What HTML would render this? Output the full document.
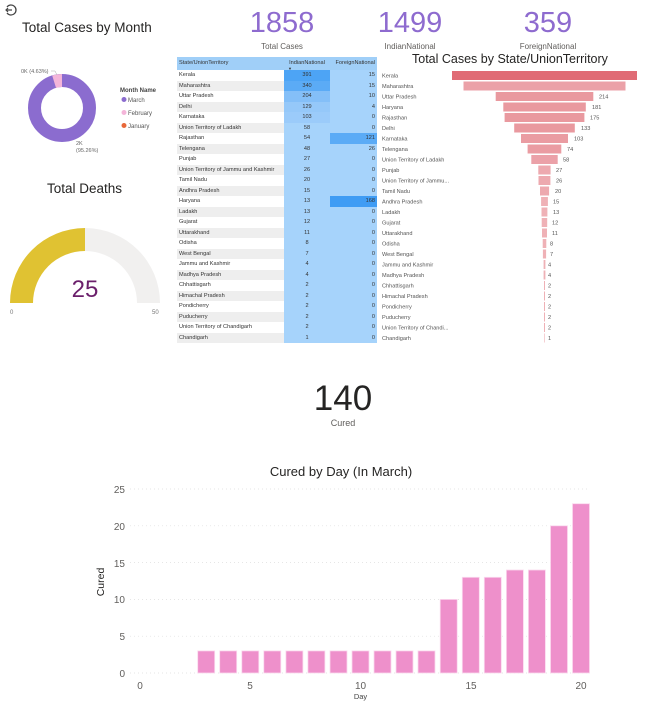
<!DOCTYPE html>
<html><head><meta charset="utf-8"><style>
*{margin:0;padding:0;box-sizing:border-box}
body{width:671px;height:705px;background:#fff;position:relative;overflow:hidden;font-family:"Liberation Sans",sans-serif;color:#252423}
.a{position:absolute;white-space:nowrap}
.kpi{font-size:29px;color:#8E6BCF;text-align:center;width:120px}
.kl{font-size:8px;color:#605E5C;text-align:center;width:120px}
table{position:absolute;left:177px;top:57px;border-collapse:collapse;font-size:5.6px;color:#333;table-layout:fixed;width:200px}
td{height:10.5px;padding:0 2px;line-height:10.5px;overflow:hidden;white-space:nowrap}
td.s{width:107px;}
td.n{width:46px;text-align:right;background:#A6D3FB}
td.i{text-align:center}
tr:nth-child(odd) td.s{background:#EEEEEE}
tr:nth-child(even) td.s{background:#fff}
tr.h td{background:#A0CFF8;height:13px;line-height:11px;position:relative}
</style></head><body>
<svg class="a" style="left:4px;top:3px" width="14" height="14" viewBox="0 0 14 14"><path d="M3 4 A5 5 0 1 1 3 10" fill="none" stroke="#444" stroke-width="1.3"/><path d="M2 7 H8 M4 5 L2 7 L4 9" fill="none" stroke="#444" stroke-width="1.2"/></svg>
<div class="a" style="left:22px;top:20px;font-size:13.5px">Total Cases by Month</div>
<svg class="a" style="left:0;top:0" width="170" height="170">
<circle cx="62" cy="108" r="27.5" fill="none" stroke="#8B6CCF" stroke-width="13"/>
<path d="M54.1 81.7 A27.5 27.5 0 0 1 62 80.5" fill="none" stroke="#F4B5D9" stroke-width="13"/>
<text x="21" y="73" font-size="5.5" fill="#666" font-family="Liberation Sans">0K (4.63%)</text>
<path d="M51 71 H55 L57 75" fill="none" stroke="#aaa" stroke-width="0.5"/>
<text x="76" y="145" font-size="5.5" fill="#666" font-family="Liberation Sans">2K</text>
<text x="76" y="152" font-size="5.5" fill="#666" font-family="Liberation Sans">(95.26%)</text>
<text x="120" y="92" font-size="6" font-weight="bold" fill="#444" font-family="Liberation Sans">Month Name</text>
<circle cx="124" cy="99.5" r="2.5" fill="#8B6CCF"/><text x="128" y="102" font-size="6" fill="#555" font-family="Liberation Sans">March</text>
<circle cx="124" cy="112.5" r="2.5" fill="#F4B5D9"/><text x="128" y="115" font-size="6" fill="#555" font-family="Liberation Sans">February</text>
<circle cx="124" cy="125.5" r="2.5" fill="#E8683A"/><text x="128" y="128" font-size="6" fill="#555" font-family="Liberation Sans">January</text>
</svg>
<div class="a" style="left:47px;top:181px;font-size:13.5px">Total Deaths</div>
<svg class="a" style="left:0;top:220px" width="170" height="100">
<path d="M10 83 A75 75 0 0 1 85 8 L85 31 A52 52 0 0 0 33 83 Z" fill="#E0C232"/>
<path d="M85 8 A75 75 0 0 1 160 83 L137 83 A52 52 0 0 0 85 31 Z" fill="#F1F0EF"/>
<text x="85" y="77" font-size="24" fill="#6B1F6B" text-anchor="middle" font-family="Liberation Sans">25</text>
<text x="10" y="94" font-size="6" fill="#777" font-family="Liberation Sans">0</text>
<text x="152" y="94" font-size="6" fill="#777" font-family="Liberation Sans">50</text>
</svg>
<div class="a kpi" style="left:222px;top:7px">1858</div><div class="a kl" style="left:222px;top:42px">Total Cases</div>
<div class="a kpi" style="left:350px;top:7px">1499</div><div class="a kl" style="left:350px;top:42px">IndianNational</div>
<div class="a kpi" style="left:488px;top:7px">359</div><div class="a kl" style="left:488px;top:42px">ForeignNational</div>
<table>
<colgroup><col style="width:107px"><col style="width:46px"><col style="width:47px"></colgroup>
<tr class="h"><td class="s" style="background:#A0CFF8">State/UnionTerritory</td><td class="i" style="background:#A0CFF8">IndianNational<span style="position:absolute;left:4px;top:6px;font-size:4px">▼</span></td><td style="text-align:right;background:#A0CFF8">ForeignNational</td></tr>
<tr><td class="s">Kerala</td><td class="n i" style="background:#4DA4F5">391</td><td class="n">15</td></tr>
<tr><td class="s">Maharashtra</td><td class="n i" style="background:#5BABF6">340</td><td class="n">15</td></tr>
<tr><td class="s">Uttar Pradesh</td><td class="n i" style="background:#84BFF8">204</td><td class="n">10</td></tr>
<tr><td class="s">Delhi</td><td class="n i" style="background:#95C8F9">129</td><td class="n">4</td></tr>
<tr><td class="s">Karnataka</td><td class="n i" style="background:#9BCBFA">103</td><td class="n">0</td></tr>
<tr><td class="s">Union Territory of Ladakh</td><td class="n i">58</td><td class="n">0</td></tr>
<tr><td class="s">Rajasthan</td><td class="n i">54</td><td class="n" style="background:#5BABF6">121</td></tr>
<tr><td class="s">Telengana</td><td class="n i">48</td><td class="n">26</td></tr>
<tr><td class="s">Punjab</td><td class="n i">27</td><td class="n">0</td></tr>
<tr><td class="s">Union Territory of Jammu and Kashmir</td><td class="n i">26</td><td class="n">0</td></tr>
<tr><td class="s">Tamil Nadu</td><td class="n i">20</td><td class="n">0</td></tr>
<tr><td class="s">Andhra Pradesh</td><td class="n i">15</td><td class="n">0</td></tr>
<tr><td class="s">Haryana</td><td class="n i">13</td><td class="n" style="background:#3F9CF4">168</td></tr>
<tr><td class="s">Ladakh</td><td class="n i">13</td><td class="n">0</td></tr>
<tr><td class="s">Gujarat</td><td class="n i">12</td><td class="n">0</td></tr>
<tr><td class="s">Uttarakhand</td><td class="n i">11</td><td class="n">0</td></tr>
<tr><td class="s">Odisha</td><td class="n i">8</td><td class="n">0</td></tr>
<tr><td class="s">West Bengal</td><td class="n i">7</td><td class="n">0</td></tr>
<tr><td class="s">Jammu and Kashmir</td><td class="n i">4</td><td class="n">0</td></tr>
<tr><td class="s">Madhya Pradesh</td><td class="n i">4</td><td class="n">0</td></tr>
<tr><td class="s">Chhattisgarh</td><td class="n i">2</td><td class="n">0</td></tr>
<tr><td class="s">Himachal Pradesh</td><td class="n i">2</td><td class="n">0</td></tr>
<tr><td class="s">Pondicherry</td><td class="n i">2</td><td class="n">0</td></tr>
<tr><td class="s">Puducherry</td><td class="n i">2</td><td class="n">0</td></tr>
<tr><td class="s">Union Territory of Chandigarh</td><td class="n i">2</td><td class="n">0</td></tr>
<tr><td class="s">Chandigarh</td><td class="n i">1</td><td class="n">0</td></tr>
</table>
<div class="a" style="left:412px;top:52px;font-size:12.5px">Total Cases by State/UnionTerritory</div>
<svg class="a" style="left:380px;top:65px" width="291" height="285" font-family="Liberation Sans" font-size="5.6" fill="#555">
<g transform="translate(-380,-65)">
<rect x="452" y="71" width="185" height="9" fill="#E06B75"/><text x="382" y="77.5">Kerala</text>
<rect x="463.5" y="81.5" width="162" height="9" fill="#EBA1A8"/><text x="382" y="88">Maharashtra</text>
<rect x="495.7" y="92" width="97.6" height="9" fill="#E9999F"/><text x="382" y="98.5">Uttar Pradesh</text><text x="599" y="98.5">214</text>
<rect x="503.3" y="102.5" width="82.5" height="9" fill="#E9999F"/><text x="382" y="109">Haryana</text><text x="592" y="109">181</text>
<rect x="504.6" y="113" width="79.8" height="9" fill="#E9999F"/><text x="382" y="119.5">Rajasthan</text><text x="590" y="119.5">175</text>
<rect x="514.2" y="123.5" width="60.6" height="9" fill="#E9999F"/><text x="382" y="130">Delhi</text><text x="581" y="130">133</text>
<rect x="521" y="134" width="47" height="9" fill="#EA9CA2"/><text x="382" y="140.5">Karnataka</text><text x="574" y="140.5">103</text>
<rect x="527.6" y="144.5" width="33.7" height="9" fill="#EA9CA2"/><text x="382" y="151">Telengana</text><text x="567" y="151">74</text>
<rect x="531.3" y="155" width="26.4" height="9" fill="#EBA1A8"/><text x="382" y="161.5">Union Territory of Ladakh</text><text x="563" y="161.5">58</text>
<rect x="538.3" y="165.5" width="12.3" height="9" fill="#EDA9AF"/><text x="382" y="172">Punjab</text><text x="556" y="172">27</text>
<rect x="538.5" y="176" width="11.9" height="9" fill="#EDA9AF"/><text x="382" y="182.5">Union Territory of Jammu...</text><text x="556" y="182.5">26</text>
<rect x="540" y="186.5" width="9.1" height="9" fill="#EDA9AF"/><text x="382" y="193">Tamil Nadu</text><text x="555" y="193">20</text>
<rect x="541.1" y="197" width="6.8" height="9" fill="#EFB1B6"/><text x="382" y="203.5">Andhra Pradesh</text><text x="553" y="203.5">15</text>
<rect x="541.5" y="207.5" width="5.9" height="9" fill="#EFB1B6"/><text x="382" y="214">Ladakh</text><text x="553" y="214">13</text>
<rect x="541.7" y="218" width="5.5" height="9" fill="#EFB1B6"/><text x="382" y="224.5">Gujarat</text><text x="552" y="224.5">12</text>
<rect x="542" y="228.5" width="5" height="9" fill="#EFB1B6"/><text x="382" y="235">Uttarakhand</text><text x="552" y="235">11</text>
<rect x="542.7" y="239" width="3.6" height="9" fill="#EFB1B6"/><text x="382" y="245.5">Odisha</text><text x="550" y="245.5">8</text>
<rect x="542.9" y="249.5" width="3.2" height="9" fill="#EFB1B6"/><text x="382" y="256">West Bengal</text><text x="550" y="256">7</text>
<rect x="543.6" y="260" width="1.8" height="9" fill="#EFB1B6"/><text x="382" y="266.5">Jammu and Kashmir</text><text x="548" y="266.5">4</text>
<rect x="543.6" y="270.5" width="1.8" height="9" fill="#EFB1B6"/><text x="382" y="277">Madhya Pradesh</text><text x="548" y="277">4</text>
<rect x="544" y="281" width="1" height="9" fill="#EFB1B6"/><text x="382" y="287.5">Chhattisgarh</text><text x="548" y="287.5">2</text>
<rect x="544" y="291.5" width="1" height="9" fill="#EFB1B6"/><text x="382" y="298">Himachal Pradesh</text><text x="548" y="298">2</text>
<rect x="544" y="302" width="1" height="9" fill="#EFB1B6"/><text x="382" y="308.5">Pondicherry</text><text x="548" y="308.5">2</text>
<rect x="544" y="312.5" width="1" height="9" fill="#EFB1B6"/><text x="382" y="319">Puducherry</text><text x="548" y="319">2</text>
<rect x="544" y="323" width="1" height="9" fill="#EFB1B6"/><text x="382" y="329.5">Union Territory of Chandi...</text><text x="548" y="329.5">2</text>
<rect x="544.2" y="333.5" width="0.6" height="9" fill="#EFB1B6"/><text x="382" y="340">Chandigarh</text><text x="548" y="340">1</text>
</g></svg>
<div class="a" style="left:283px;top:379px;width:120px;text-align:center;font-size:35px;color:#252423">140</div>
<div class="a" style="left:283px;top:418px;width:120px;text-align:center;font-size:9px;color:#605E5C">Cured</div>
<svg class="a" style="left:0;top:455px" width="671" height="250" font-family="Liberation Sans">
<g transform="translate(0,-455)">
<text x="341" y="476" font-size="13" fill="#252423" text-anchor="middle">Cured by Day (In March)</text>
<g stroke="#ddd" stroke-width="0.7" stroke-dasharray="1,3">
<line x1="130" x2="590" y1="489" y2="489"/><line x1="130" x2="590" y1="525.8" y2="525.8"/><line x1="130" x2="590" y1="562.6" y2="562.6"/><line x1="130" x2="590" y1="599.4" y2="599.4"/><line x1="130" x2="590" y1="636.2" y2="636.2"/><line x1="130" x2="590" y1="673" y2="673"/></g>
<g font-size="10" fill="#605E5C" text-anchor="end">
<text x="125" y="493">25</text><text x="125" y="530">20</text><text x="125" y="567">15</text><text x="125" y="603">10</text><text x="125" y="640">5</text><text x="125" y="677">0</text></g>
<g font-size="10" fill="#605E5C" text-anchor="middle">
<text x="140" y="689">0</text><text x="250" y="689">5</text><text x="360.5" y="689">10</text><text x="471" y="689">15</text><text x="581" y="689">20</text></g>
<text x="360.5" y="699" font-size="7.5" fill="#444" text-anchor="middle">Day</text>
<text transform="translate(104,582) rotate(-90)" font-size="10.5" fill="#252423" text-anchor="middle">Cured</text>
<g fill="#EE90CB" stroke="#FBD9EE" stroke-width="0.8">
<rect x="197.7" y="650.9" width="17" height="22.1"/><rect x="219.7" y="650.9" width="17" height="22.1"/><rect x="241.8" y="650.9" width="17" height="22.1"/><rect x="263.8" y="650.9" width="17" height="22.1"/><rect x="285.9" y="650.9" width="17" height="22.1"/><rect x="307.9" y="650.9" width="17" height="22.1"/><rect x="330" y="650.9" width="17" height="22.1"/><rect x="352" y="650.9" width="17" height="22.1"/><rect x="374" y="650.9" width="17" height="22.1"/><rect x="396" y="650.9" width="17" height="22.1"/><rect x="418" y="650.9" width="17" height="22.1"/>
<rect x="440.2" y="599.4" width="17" height="73.6"/><rect x="462.3" y="577.3" width="17" height="95.7"/><rect x="484.3" y="577.3" width="17" height="95.7"/><rect x="506.4" y="570" width="17" height="103"/><rect x="528.4" y="570" width="17" height="103"/><rect x="550.5" y="525.8" width="17" height="147.2"/><rect x="572.5" y="503.7" width="17" height="169.3"/>
</g></g></svg>
</body></html>
